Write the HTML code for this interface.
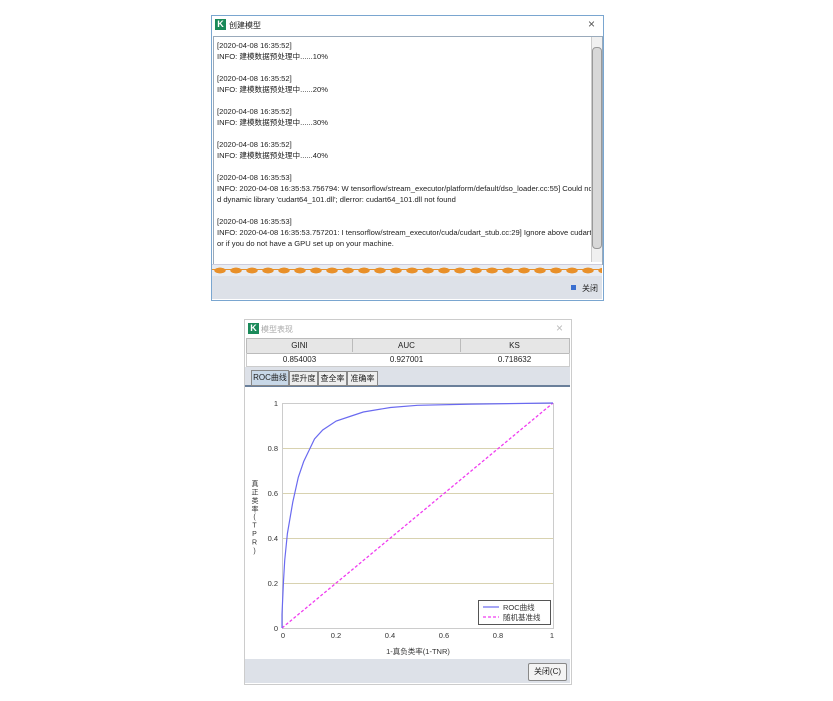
<!DOCTYPE html>
<html><head><meta charset="utf-8"><style>
body{margin:0;width:833px;height:701px;background:#fff;position:relative;overflow:hidden;font-family:"Liberation Sans","Noto Sans CJK SC",sans-serif;font-size:8px;color:#222}
.a{position:absolute}
.log div{line-height:11px;height:11px;white-space:nowrap}
</style></head><body>
<!-- window 1 -->
<div class="a" style="left:211px;top:15px;width:391px;height:284px;border:1px solid #7aa6d0;background:#fff"></div>
<div class="a" style="left:215px;top:19px;width:11px;height:11px;background:#1a8a5a;color:#fff;font-weight:bold;font-size:9px;line-height:11px;text-align:center">K</div>
<div class="a" style="left:229px;top:20px;font-size:8px">创建模型</div>
<div class="a" style="left:588px;top:17px;font-size:12px;color:#555">×</div>
<div class="a" style="left:213px;top:36px;width:388px;height:227px;border:1px solid #9ab;background:#fff"></div>
<div class="a" style="left:591px;top:37px;width:10px;height:225px;background:#f0f0f0;border-left:1px solid #ccc"></div>
<div class="a" style="left:592px;top:47px;width:8px;height:200px;background:#d8d8d8;border-radius:4px;border:1px solid #999"></div>
<div class="a log" style="left:217px;top:40px;width:374px;overflow:hidden;font-size:7.6px">
<div>[2020-04-08 16:35:52]</div><div>INFO: 建模数据预处理中......10%</div><div></div>
<div>[2020-04-08 16:35:52]</div><div>INFO: 建模数据预处理中......20%</div><div></div>
<div>[2020-04-08 16:35:52]</div><div>INFO: 建模数据预处理中......30%</div><div></div>
<div>[2020-04-08 16:35:52]</div><div>INFO: 建模数据预处理中......40%</div><div></div>
<div>[2020-04-08 16:35:53]</div><div>INFO: 2020-04-08 16:35:53.756794: W tensorflow/stream_executor/platform/default/dso_loader.cc:55] Could not loa</div><div>d dynamic library 'cudart64_101.dll'; dlerror: cudart64_101.dll not found</div><div></div>
<div>[2020-04-08 16:35:53]</div><div>INFO: 2020-04-08 16:35:53.757201: I tensorflow/stream_executor/cuda/cudart_stub.cc:29] Ignore above cudart dlerr</div><div>or if you do not have a GPU set up on your machine.</div>
</div>
<div class="a" style="left:212px;top:264px;width:390px;height:11px;background:radial-gradient(ellipse 6px 3px at 8px 5.5px,#e8902a 90%,transparent 100%) 0 0/16px 11px repeat-x,linear-gradient(#e8ecf2,#e8ecf2);border-top:1px solid #ccd;border-bottom:1px solid #ccd"></div>
<div class="a" style="left:212px;top:269px;width:390px;height:1px;background:#e8902a"></div>
<div class="a" style="left:212px;top:276px;width:390px;height:23px;background:#dde1e8"></div>
<div class="a" style="left:571px;top:285px;width:5px;height:5px;background:#3a6fd0"></div>
<div class="a" style="left:582px;top:283px;font-size:8px">关闭</div>
<!-- window 2 -->
<div class="a" style="left:244px;top:319px;width:326px;height:364px;border:1px solid #ccc;background:#fff"></div>
<div class="a" style="left:248px;top:323px;width:11px;height:11px;background:#1a8a5a;color:#fff;font-weight:bold;font-size:9px;line-height:11px;text-align:center">K</div>
<div class="a" style="left:261px;top:324px;color:#aaa">模型表现</div>
<div class="a" style="left:556px;top:321px;font-size:12px;color:#bbb">×</div>
<div class="a" style="left:246px;top:338px;width:322px;height:14px;background:#e6e6e6;border:1px solid #bbb"></div>
<div class="a" style="left:352px;top:338px;width:1px;height:14px;background:#bbb"></div>
<div class="a" style="left:460px;top:338px;width:1px;height:14px;background:#bbb"></div>
<div class="a" style="left:246px;top:341px;width:107px;text-align:center">GINI</div>
<div class="a" style="left:353px;top:341px;width:107px;text-align:center">AUC</div>
<div class="a" style="left:461px;top:341px;width:107px;text-align:center">KS</div>
<div class="a" style="left:246px;top:353px;width:322px;height:13px;border:1px solid #ccc;border-top:none"></div>
<div class="a" style="left:246px;top:355px;width:107px;text-align:center">0.854003</div>
<div class="a" style="left:353px;top:355px;width:107px;text-align:center">0.927001</div>
<div class="a" style="left:461px;top:355px;width:107px;text-align:center">0.718632</div>
<div class="a" style="left:245px;top:367px;width:325px;height:18px;background:#dde1e8;border-bottom:2px solid #6a7f9a"></div>
<div class="a" style="left:251px;top:370px;width:36px;height:14px;background:#c8d8e8;border:1px solid #888;text-align:center;line-height:14px">ROC曲线</div>
<div class="a" style="left:289px;top:371px;width:27px;height:13px;background:#eee;border:1px solid #888;text-align:center;line-height:13px">提升度</div>
<div class="a" style="left:318px;top:371px;width:27px;height:13px;background:#eee;border:1px solid #888;text-align:center;line-height:13px">查全率</div>
<div class="a" style="left:347px;top:371px;width:29px;height:13px;background:#eee;border:1px solid #888;text-align:center;line-height:13px">准确率</div>
<svg class="a" style="left:0;top:0" width="833" height="701">
<g stroke="#d8d2b0" stroke-width="1">
<line x1="282" y1="448.5" x2="553" y2="448.5"/><line x1="282" y1="493.5" x2="553" y2="493.5"/>
<line x1="282" y1="538.5" x2="553" y2="538.5"/><line x1="282" y1="583.5" x2="553" y2="583.5"/>
</g>
<rect x="282.5" y="403.5" width="271" height="225" fill="none" stroke="#ccc"/>
<line x1="282" y1="628" x2="553" y2="403" stroke="#f03cf0" stroke-width="1.3" stroke-dasharray="3,2"/>
<polyline fill="none" stroke="#6a6af0" stroke-width="1.2" points="282,628 282,614.5 283.4,583 284.7,560.5 287.4,533.5 292.8,502 298.3,477.3 303.7,461.5 309.1,450.3 314.5,439 322.7,430 336.2,421 349.8,416.5 363.3,412 390.4,407.5 417.5,405.3 471.7,404.1 553,403"/>
<rect x="478.5" y="600.5" width="72" height="24" fill="#fff" stroke="#555"/>
<line x1="483" y1="607" x2="499" y2="607" stroke="#6a6af0" stroke-width="1.2"/>
<line x1="483" y1="617" x2="499" y2="617" stroke="#f03cf0" stroke-width="1.3" stroke-dasharray="3,2"/>
<g font-family="Liberation Sans,Noto Sans CJK SC,sans-serif" font-size="7.5" fill="#333">
<text x="503" y="610">ROC曲线</text><text x="503" y="620">随机基准线</text>
<text x="278" y="406" text-anchor="end">1</text>
<text x="278" y="451" text-anchor="end">0.8</text>
<text x="278" y="496" text-anchor="end">0.6</text>
<text x="278" y="541" text-anchor="end">0.4</text>
<text x="278" y="586" text-anchor="end">0.2</text>
<text x="278" y="631" text-anchor="end">0</text>
<text x="283" y="638" text-anchor="middle">0</text>
<text x="336" y="638" text-anchor="middle">0.2</text>
<text x="390" y="638" text-anchor="middle">0.4</text>
<text x="444" y="638" text-anchor="middle">0.6</text>
<text x="498" y="638" text-anchor="middle">0.8</text>
<text x="552" y="638" text-anchor="middle">1</text>
<text x="418" y="654" text-anchor="middle">1-真负类率(1-TNR)</text>
</g>
</svg>
<div class="a" style="left:250px;top:480px;font-size:7px;line-height:8px;color:#333;writing-mode:vertical-rl;text-orientation:upright;letter-spacing:1.5px">真正类率(TPR)</div>
<div class="a" style="left:245px;top:659px;width:325px;height:24px;background:#dde1e8"></div>
<div class="a" style="left:528px;top:663px;width:37px;height:16px;border:1px solid #888;border-radius:2px;background:#f4f4f4;text-align:center;line-height:16px">关闭(C)</div>
</body></html>
